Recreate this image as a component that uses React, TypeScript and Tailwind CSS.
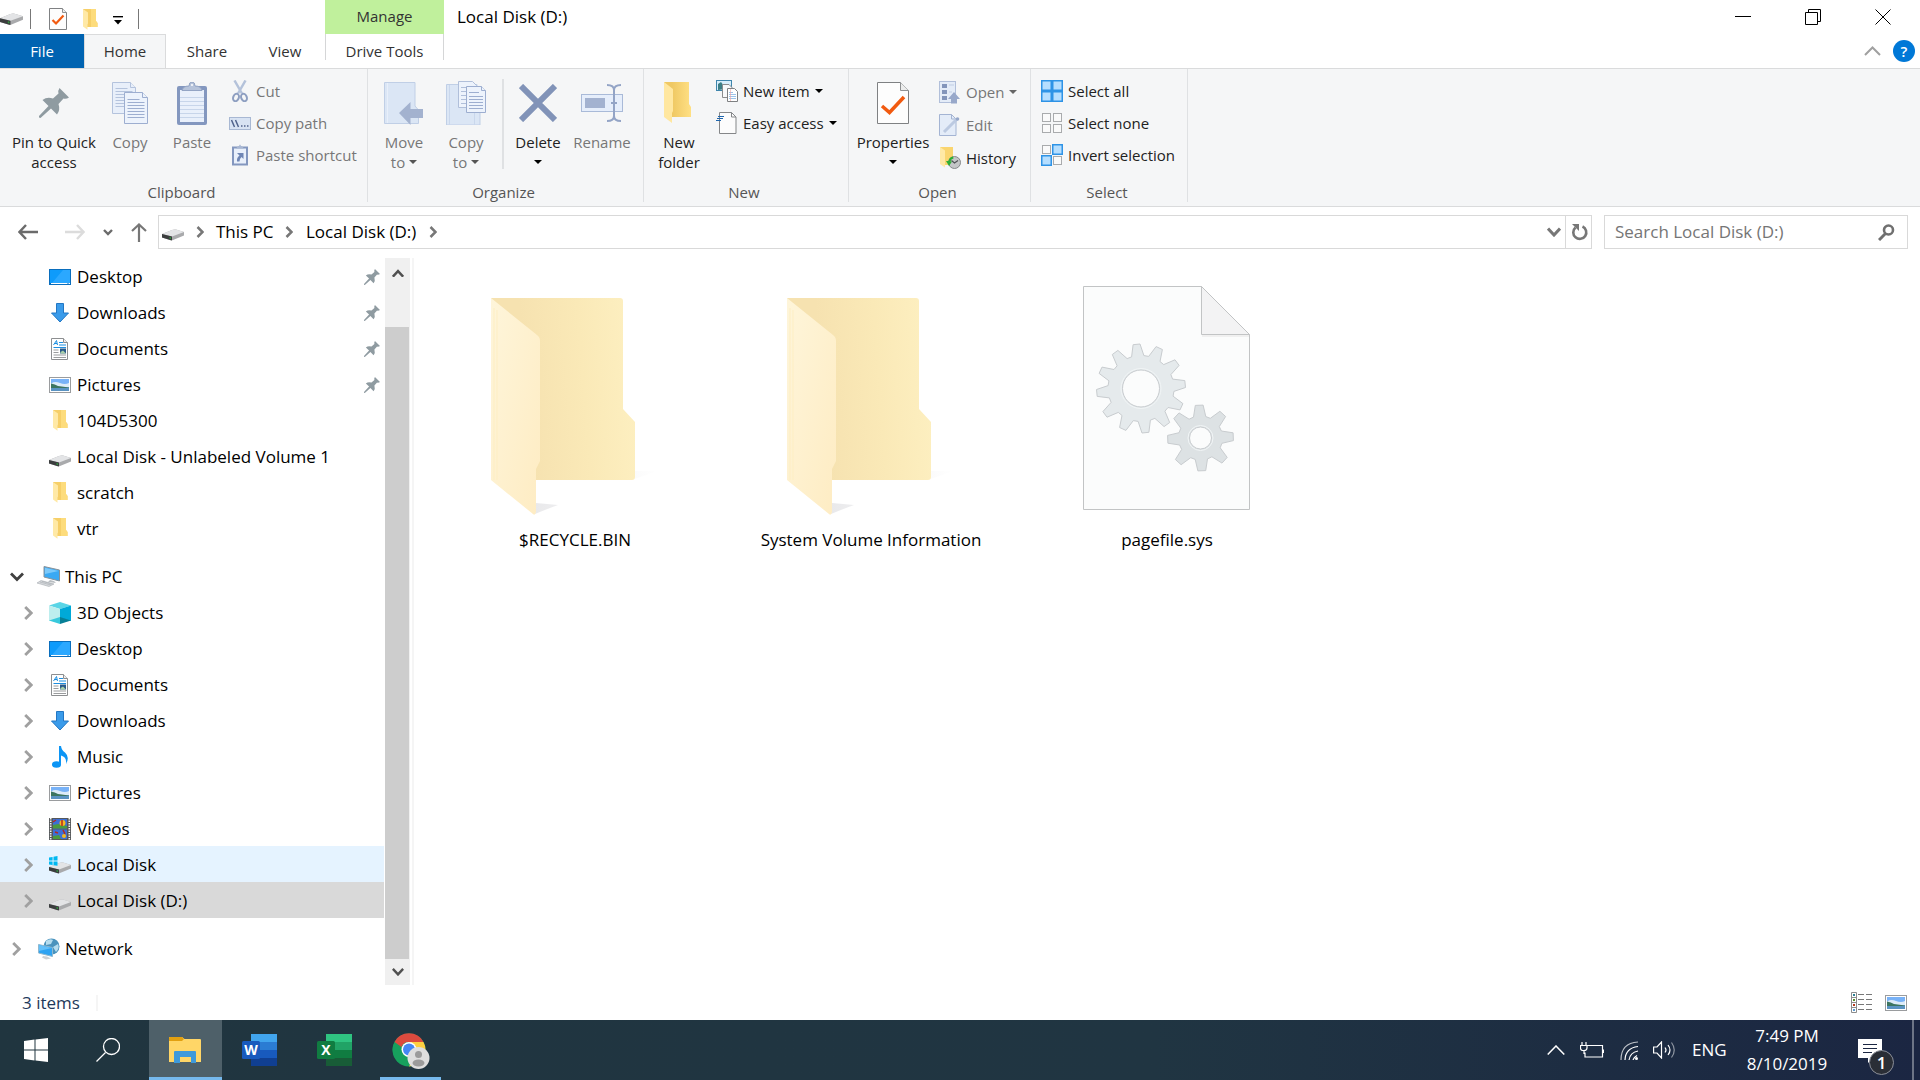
import type { ReactNode } from "react";

interface IconProps {
  className?: string;
}

const DriveIcon = ({ className = "w-[22px]" }: IconProps) => (
  <svg viewBox="0 0 22 12" className={`${className} shrink-0`}>
    <path d="M0 5 L10 1 Q12 0 14 .6 L22 3 L22 6.5 L11 11 Q9.500 11.600 8 11 L0 8.500Z" fill="#a9aaac" />
    <path d="M0 5 L10 1 Q12 0 14 .6 L22 3 L10 7.500Z" fill="#e3e4e6" />
    <path d="M0 5 L10 7.500 L10 11.400 L8 11 L0 8.500Z" fill="#3b3d3e" />
    <path d="M7.500 8 L9 8.400 L9 10 L7.500 9.600Z" fill="#2f9e3c" />
  </svg>
);

const WindowsDriveIcon = () => (
  <svg viewBox="0 0 22 18" className="w-[22px] shrink-0">
    <path d="M0 11 L10 7 Q12 6 14 6.600 L22 9 L22 12.500 L11 17 Q9.500 17.600 8 17 L0 14.500Z" fill="#a9aaac" />
    <path d="M0 11 L10 7 Q12 6 14 6.600 L22 9 L10 13.500Z" fill="#e3e4e6" />
    <path d="M0 11 L10 13.500 L10 17.400 L8 17 L0 14.500Z" fill="#3b3d3e" />
    <path d="M7.500 14 L9 14.400 L9 16 L7.500 15.600Z" fill="#2f9e3c" />
    <path d="M0 1.600 L3.600 1 L3.600 4.600 L0 4.600Z M4.500 .8 L8.500 0 L8.500 4.600 L4.500 4.600Z M0 5.500 L3.600 5.500 L3.600 9 L0 8.600Z M4.500 5.500 L8.500 5.500 L8.500 9.800 L4.500 9.200Z" fill="#00b8f1" />
  </svg>
);

const SmallFolderIcon = ({ className = "w-[15px]" }: IconProps) => (
  <svg viewBox="0 0 15 21" className={`${className} shrink-0`}>
    <path d="M0 0 H13 V12 L14.500 14 V18 H4 L0 2Z" fill="#f6cf68" />
    <path d="M8 0 H13 V12 L14.500 14 V18 H8Z" fill="#fddc7c" />
    <path d="M0 0 L5 3.500 V14.500 L4.500 15.500 V20.800 L0 17.500Z" fill="#ffe9a6" />
  </svg>
);

const DesktopIcon = () => (
  <svg viewBox="0 0 22 16" className="w-[22px] shrink-0">
    <rect width="22" height="16" fill="#0a6ebd" />
    <rect x="1" y="1" width="20" height="13" fill="#0e9bfb" />
    <path d="M14 1 H21 V14 H3Z" fill="#2ba8ff" />
    <path d="M2 14.500h16M18.500 14.500h1M20 14.500h1" stroke="#fff" strokeWidth="1" />
  </svg>
);

const DownloadIcon = () => (
  <svg viewBox="0 0 22 20" className="w-[22px] shrink-0">
    <path d="M7.500 .5 H14.500 V10 H19.500 L11 19 L2.500 10 H7.500Z" fill="#3a9bea" stroke="#2377c4" />
  </svg>
);

const DocumentIcon = () => (
  <svg viewBox="0 0 22 22" className="w-[22px] shrink-0">
    <path d="M2.500 .5 H14.500 L18.500 4.500 V21.500 H2.500Z" fill="#fff" stroke="#8d8f91" />
    <path d="M14.500 .5 V4.500 H18.500" fill="#eee" stroke="#8d8f91" />
    <path d="M4.500 7 L7.500 2.500 L8.500 7 M6 5.500 H8 M10 4.500h4M10 7h7M4.500 9.500h12.500" stroke="#1e8fe0" fill="none" />
    <path d="M4.500 12h5M4.500 14.500h5M4.500 17h12.500M4.500 19.500h12.500" stroke="#9a9c9e" />
    <rect x="11" y="10.500" width="6" height="5" fill="#2a5a8a" />
    <path d="M11.500 14 L14 12.500 L17 15.500H11.500Z" fill="#a9cfa6" />
  </svg>
);

const PictureIcon = () => (
  <svg viewBox="0 0 22 16" className="w-[22px] shrink-0">
    <rect x=".5" y=".5" width="21" height="15" fill="#fff" stroke="#9a9c9e" />
    <rect x="2" y="2" width="18" height="12" fill="#78b2f7" />
    <path d="M2 6.500 Q6 4 11 6 T20 6 V10 H2Z" fill="#dcebf8" />
    <path d="M2 6.500 Q6 7 9 9 L20 10.500 V11 H2Z" fill="#3c7560" />
    <path d="M2 11 H20 V14 H2Z" fill="#5a93c2" />
  </svg>
);

const ComputerIcon = () => (
  <svg viewBox="0 0 23 21" className="w-[23px] shrink-0">
    <path d="M7 .5 L22.500 4 V15 L7 11Z" fill="#3aa9f4" stroke="#8a9298" />
    <path d="M8 1.800 L21.500 5 L8 8Z" fill="#7cc9fa" />
    <path d="M13 14 L17 15 L19 17 L11 16Z" fill="#b8bdc1" />
    <path d="M4 14.500 L17 18 L12 20.500 L0 17Z" fill="#d6d9dc" stroke="#a8adb1" strokeWidth=".6" />
    <path d="M3 16 L14 19 M5 15.300 L15.500 18.200" stroke="#a8adb1" strokeWidth=".6" />
  </svg>
);

const CubeIcon = () => (
  <svg viewBox="0 0 22 22" className="w-[22px] shrink-0">
    <path d="M0 3.500 L11 0 L22 3.500 L11 7Z" fill="#5ad5e6" />
    <path d="M0 3.500 L11 7 V16 L0 19Z" fill="#bdeeee" />
    <path d="M22 3.500 L11 7 V16 L22 19Z" fill="#00a9d8" />
    <path d="M0 18.500 L11 15 V22Z" fill="#38c9dc" />
    <path d="M22 18.500 L11 15 V22Z" fill="#077f96" />
  </svg>
);

const MusicIcon = () => (
  <svg viewBox="0 0 22 22" className="w-[22px] shrink-0">
    <ellipse cx="7.500" cy="18.500" rx="4.500" ry="3.300" fill="#0c95f5" />
    <path d="M10 0 H12 Q12.500 4 16 6.500 Q21 11 17 18 Q18 11 12 9.500 V19 H10Z" fill="#0c95f5" />
  </svg>
);

const VideoIcon = () => (
  <svg viewBox="0 0 22 22" className="w-[22px] shrink-0">
    <rect width="22" height="22" fill="#55585a" />
    <path d="M1.700 0V22M20.300 0V22" stroke="#f2f2f2" strokeWidth="1.600" strokeDasharray="1.500 1" />
    <rect x="4" y="1" width="14" height="9.500" fill="#3c6fd6" />
    <rect x="4" y="11.500" width="14" height="9.500" fill="#3c6fd6" />
    <path d="M4 10.500 V7 L9 6 L18 8 V10.500Z M4 21 V18 L10 17 L12 21Z" fill="#4b9a3e" />
    <circle cx="13.500" cy="5" r="3" fill="#f4b921" />
    <path d="M13 2v6M4 4l3-2M14 12l2 4M6 14l3 1" stroke="#b52a1e" strokeWidth="1.500" />
    <circle cx="15" cy="18" r="2" fill="#f4b921" />
  </svg>
);

const NetworkIcon = () => (
  <svg viewBox="0 0 22 22" className="w-[22px] shrink-0">
    <circle cx="13.500" cy="8.500" r="8" fill="#4a93bd" />
    <path d="M8 3 Q12 0 15 2 L13 6 L8 7Z M15 9 L20 6 Q22 10 18 14Z" fill="#b5dcee" />
    <path d="M.5 6.500 L14.500 9.500 V18.500 L.5 15Z" fill="#2ea3f2" stroke="#8fb8cf" />
    <path d="M1 7 L14 10 L1 13Z" fill="#62c0fa" />
    <path d="M5 18 L9 18.500 L13 20.500 L8 21.500 L4 19.500Z" fill="#cdd1d4" />
  </svg>
);

const PinIcon = ({ className = "w-4" }: IconProps) => (
  <svg viewBox="0 0 30 30" className={`${className} shrink-0`}>
    <path d="M20.500 0 L30 9.500 Q27 11.500 24.500 10.500 L19.500 16 Q21.500 22 18 26.500 L12 20.500 L1.500 30 L0 29.500 L0 28 L9.500 18 L3.500 12 Q8 8.500 14 10.500 L19.500 5.500 Q18.500 3 20.500 0Z" fill="#8f9ba1" />
  </svg>
);

const TreeChevron = ({ open = false }: { open?: boolean }) =>
  open ? (
    <svg viewBox="0 0 14 10" className="w-3.5 shrink-0">
      <path d="M1 1.500 L7 7.500 L13 1.500" fill="none" stroke="#404040" strokeWidth="2.800" />
    </svg>
  ) : (
    <svg viewBox="0 0 9 14" className="w-[9px] shrink-0">
      <path d="M1.200 1 L7.200 7 L1.200 13" fill="none" stroke="#a0a0a0" strokeWidth="2.800" />
    </svg>
  );

const Caret = ({ className = "text-black" }: IconProps) => (
  <svg viewBox="0 0 8 4" className={`${className} h-1 w-2 shrink-0`} fill="currentColor">
    <path d="M0 0H8L4 4Z" />
  </svg>
);

/* ribbon icons */

const CopyIcon = () => (
  <svg viewBox="0 0 36 42" className="w-9">
    <g fill="#e8effa" stroke="#b4c3dd">
      <path d="M.5 .5 H18.500 L23.500 5.500 V31.500 H.5Z" />
      <path d="M18.500 .5 V5.500 H23.500" />
      <path d="M3.500 6.500h12M3.500 9.500h17M3.500 12.500h17M3.500 15.500h17M3.500 18.500h17M3.500 21.500h17M3.500 24.500h17" />
    </g>
    <g fill="#edf3fc" stroke="#9daed0">
      <path d="M12.500 10.500 H30.500 L35.500 15.500 V41.500 H12.500Z" />
      <path d="M30.500 10.500 V15.500 H35.500" />
      <path d="M15.500 17.500h12M15.500 20.500h17M15.500 23.500h17M15.500 26.500h17M15.500 29.500h17M15.500 32.500h17M15.500 35.500h17" />
    </g>
  </svg>
);

const PasteIcon = () => (
  <svg viewBox="0 0 30 43" className="w-[30px]">
    <rect y="4" width="30" height="39" rx="2" fill="#8397bf" />
    <rect x="3" y="8" width="24" height="32" fill="#e9f0fb" />
    <path d="M3 15.500h24M3 19.500h24M3 23.500h24M3 27.500h24M3 31.500h24M3 35.500h24" stroke="#c7d5ea" />
    <path d="M5 8.500 Q6 4 12 4 Q12 0 15 0 Q18 0 18 4 Q24 4 25 8.500Z" fill="#b6c3da" stroke="#93a4c4" />
    <circle cx="15" cy="3" r="1" fill="#fff" />
  </svg>
);

const CutIcon = () => (
  <svg viewBox="0 0 22 22" className="w-[22px]" fill="none">
    <path d="M5.500 .5 L13 13.500 M16.500 .5 L9 13.500" stroke="#b4c2da" strokeWidth="2.500" />
    <ellipse cx="7" cy="17.500" rx="2.800" ry="3.800" transform="rotate(20 7 17.500)" stroke="#8e9fc1" strokeWidth="2" />
    <ellipse cx="15" cy="17.500" rx="2.800" ry="3.800" transform="rotate(-20 15 17.500)" stroke="#8e9fc1" strokeWidth="2" />
  </svg>
);

const CopyPathIcon = () => (
  <svg viewBox="0 0 22 13" className="w-[22px]">
    <rect x=".5" y=".5" width="21" height="12" fill="#d8e3f3" stroke="#a8b8d3" />
    <path d="M2.500 3 L5.500 10 M6.500 3 L9.500 10" stroke="#50638c" strokeWidth="1.500" />
    <path d="M12 9h1.500M15 9h1.500M18 9h1.500" stroke="#50638c" strokeWidth="1.600" />
  </svg>
);

const PasteShortcutIcon = () => (
  <svg viewBox="0 0 22 22" className="w-[22px]">
    <rect x="4" y="3.500" width="14" height="17" fill="#e9f0fb" stroke="#8397bf" strokeWidth="2" />
    <path d="M7 4.500 L9 2 H10 Q11 -1 12 2 H13 L15 4.500Z" fill="#a9b8d3" />
    <path d="M8 9 H14.500 V15 L12.500 13 Q10.500 14.500 10.500 17.500 H8 Q7.500 13.500 10.500 11.500Z" fill="#6f86b5" />
  </svg>
);

const MoveToIcon = () => (
  <svg viewBox="0 0 40 43" className="w-10">
    <path d="M.5 .5 H31 V24 L34.500 28 V41.500 H.5Z" fill="#dbe6f5" stroke="#c0cfe6" />
    <path d="M3.500 1V41" stroke="#e8effa" />
    <path d="M15 31 L26.500 20 V27 H39 V36 H26.500 V43Z" fill="#a3b2cf" />
  </svg>
);

const CopyToIcon = () => (
  <svg viewBox="0 0 40 44" className="w-10">
    <path d="M.5 3.500 H31 V27 L34 30 V44 H.5Z" fill="#dbe6f5" stroke="#c0cfe6" />
    <path d="M3.500 4V44M28.500 30V44" stroke="#c9d7ec" />
    <g fill="#edf3fc" stroke="#b0bfda">
      <path d="M12.500 .5 H26.500 L30.500 4.500 V26.500 H12.500Z" />
      <path d="M15 6.500h9M15 10.500h12M15 14.500h12M15 18.500h12M15 22.500h12" />
    </g>
    <g fill="#edf3fc" stroke="#9daed0">
      <path d="M20.500 5.500 H35.500 L39.500 9.500 V31.500 H20.500Z" />
      <path d="M35.500 5.500V9.500H39.500M23 11.500h10M23 15.500h14M23 18.500h14M23 21.500h14M23 24.500h14M23 27.500h14" />
    </g>
  </svg>
);

const DeleteIcon = () => (
  <svg viewBox="0 0 38 38" className="w-[38px]">
    <path d="M2 2 L36 36 M36 2 L2 36" stroke="#8193b8" strokeWidth="6" />
  </svg>
);

const RenameIcon = () => (
  <svg viewBox="0 0 42 38" className="w-[42px]" fill="none">
    <rect x=".5" y="10.500" width="41" height="17" fill="#e6eefb" stroke="#a9bad8" />
    <rect x="4" y="14" width="20" height="10" fill="#a3b2d0" />
    <path d="M26 1 Q33 1 33 6 V32 Q33 37 26 37 M40 1 Q33 1 33 6 M33 32 Q33 37 40 37 M30 19h6" stroke="#93a4c6" strokeWidth="2" />
  </svg>
);

const NewFolderIcon = () => (
  <svg viewBox="0 0 30 42" className="w-[30px]">
    <defs>
      <linearGradient id="folderBack">
        <stop offset=".3" stopColor="#efc863" />
        <stop offset="1" stopColor="#ffe084" />
      </linearGradient>
    </defs>
    <path d="M0 0 H25 V22 L27 25 V35 H8Z" fill="url(#folderBack)" />
    <path d="M0 0 L9 7 V29 L8 31 V41 L0 35Z" fill="#ffe7a0" />
  </svg>
);

const NewItemIcon = () => (
  <svg viewBox="0 0 22 22" className="w-[22px]">
    <rect x=".5" y=".5" width="15" height="10" fill="#d7eefb" stroke="#3f86ad" />
    <path d="M2 10 V4 L5 2 L8 6 L10 9Z" fill="#3c7f86" />
    <path d="M6.500 4.500 H13 L16 7.500 V17.500 H6.500Z" fill="#f8f9fa" stroke="#8a8c8e" />
    <path d="M11.500 8.500 H18.500 L21.500 11.500 V21.500 H11.500Z" fill="#fff" stroke="#7e8082" />
    <path d="M13 12.500h4M13 14.500h7M13 16.500h7M13 18.500h7" stroke="#9dc3ea" />
    <path d="M14.500 9v12" stroke="#f0a3a3" strokeWidth=".6" />
  </svg>
);

const EasyAccessIcon = () => (
  <svg viewBox="0 0 22 23" className="w-[22px]">
    <path d="M3.500 .5 H15.500 L20 5 V21.500 H3.500Z" fill="#fcfcfc" stroke="#858789" />
    <path d="M15.500 .5V5H20" fill="none" stroke="#858789" />
    <path d="M2 4.500h6M1 6.500h6M0 8.500h5" stroke="#1f66ad" />
  </svg>
);

const PropertiesIcon = ({ className = "w-8" }: IconProps) => (
  <svg viewBox="0 0 32 42" className={className}>
    <path d="M.5 .5 H23.500 L31.500 8.500 V41.500 H.5Z" fill="#fdfdfd" stroke="#7f8183" />
    <path d="M23.500 .5 V8.500 H31.500" fill="#eceded" stroke="#8f9193" />
    <path d="M5 24 L12.500 30.500 L27 15" fill="none" stroke="#f15a10" strokeWidth="3.500" />
  </svg>
);

const SmallPropertiesIcon = () => (
  <svg viewBox="0 0 18 22" className="w-[18px]">
    <path d="M.5 .5 H13.500 L17.500 4.500 V21.500 H.5Z" fill="#fdfdfd" stroke="#7f8183" />
    <path d="M13.500 .5 V4.500 H17.500" fill="#eceded" stroke="#8f9193" />
    <path d="M3.500 12 L7 15.500 L14.500 7.500" fill="none" stroke="#f15a10" strokeWidth="2.200" />
  </svg>
);

const OpenIcon = () => (
  <svg viewBox="0 0 22 23" className="w-[22px]">
    <rect x=".5" y=".5" width="16" height="21" fill="#e4ecf8" stroke="#b1bfda" />
    <path d="M3 3h5v4H3zM3 9h5v4H3zM3 15h5v4H3z" fill="#8395bb" />
    <path d="M10 4h5M10 11h3" stroke="#c0cde3" />
    <path d="M15 11 L21 18 H18 V22.500 H12 V18 H9Z" fill="#98a8ca" />
  </svg>
);

const EditIcon = () => (
  <svg viewBox="0 0 22 22" className="w-[22px]">
    <path d="M.5 .5 H12.500 L17 5 V21.500 H.5Z" fill="#e4ecf8" stroke="#a4b4d3" />
    <path d="M12.500 .5V5H17" fill="none" stroke="#a4b4d3" />
    <path d="M5 18 L18 5" stroke="#bccae1" strokeWidth="3" />
    <circle cx="18.500" cy="5" r="1.800" fill="#97a8ca" />
  </svg>
);

const HistoryIcon = () => (
  <svg viewBox="0 0 22 22" className="w-[22px]">
    <path d="M1 0 H14 V18 H5Z" fill="#fad56f" />
    <path d="M1 0 L6 3.500 V20.500 L1 17Z" fill="#ffe9a6" />
    <circle cx="15.500" cy="15.500" r="6" fill="#c4c6c7" stroke="#85888a" />
    <path d="M12.500 13.500 L15.500 16 L19 13.500" fill="none" stroke="#505356" strokeWidth="1.200" />
    <path d="M14 9.500 Q10 10 9.500 14 H7 L10 19 L13 14.500 H11.500 Q12 12 14.500 11.500Z" fill="#2fae35" />
  </svg>
);

const SelectIcon = ({ filled }: { filled: boolean[] }) => (
  <svg viewBox="0 0 22 22" className="w-[22px]">
    {filled.map((on, i) => {
      const x = (i % 2) * 11;
      const y = Math.floor(i / 2) * 11;
      return on ? (
        <rect key={i} x={x + 0.75} y={y + 0.75} width="9.500" height="9.500" fill="#b5deff" stroke="#2e93e6" strokeWidth="1.500" />
      ) : (
        <rect key={i} x={x + 1.5} y={y + 1.5} width="8" height="8" fill="#fafafa" stroke="#a9abad" />
      );
    })}
  </svg>
);

/* ribbon */

interface BigButtonProps {
  icon: ReactNode;
  lines: string[];
  width: string;
  caret?: boolean;
  disabled?: boolean;
}

const BigButton = ({ icon, lines, width, caret, disabled }: BigButtonProps) => (
  <button
    disabled={disabled}
    className={`${width} ${disabled ? "text-[#777]" : "text-[#222]"} flex shrink-0 flex-col items-center gap-[7px] pt-3 leading-5 whitespace-nowrap`}
  >
    <span className="flex h-11 items-center">{icon}</span>
    <span className="flex flex-col items-center">
      {lines.map((line, i) => (
        <span key={line} className="flex h-5 items-center gap-1">
          {line}
          {caret && lines.length > 1 && i === lines.length - 1 && <Caret className="text-[#555]" />}
        </span>
      ))}
      {caret && lines.length === 1 && (
        <span className="flex h-5 items-center">
          <Caret />
        </span>
      )}
    </span>
  </button>
);

interface SmallButtonProps {
  icon: ReactNode;
  label: string;
  caret?: boolean;
  disabled?: boolean;
}

const SmallButton = ({ icon, label, caret, disabled }: SmallButtonProps) => (
  <button
    disabled={disabled}
    className={`${disabled ? "text-[#777]" : "text-[#222]"} flex h-8 items-center gap-[5px] whitespace-nowrap`}
  >
    <span className="flex w-[22px] justify-center">{icon}</span>
    {label}
    {caret && <Caret className={disabled ? "text-[#666]" : "text-black"} />}
  </button>
);

const RibbonGroup = ({ title, width, children }: { title: string; width: string; children: ReactNode }) => (
  <section className={`${width} flex shrink-0 flex-col pb-1`}>
    <div className="flex flex-1 border-r border-[#dfe1e3]">{children}</div>
    <h2 className="border-r border-[#dfe1e3] pr-1 text-center leading-5 text-[#555]">{title}</h2>
  </section>
);

const Ribbon = () => (
  <div className="flex h-[139px] border-y border-[#dadbdc] bg-[#f5f6f7] text-[15px]">
    <RibbonGroup title="Clipboard" width="w-[368px]">
      <div className="flex pl-3">
        <BigButton width="w-[84px]" lines={["Pin to Quick", "access"]} icon={<PinIcon className="w-[30px]" />} />
        <BigButton width="w-[68px]" lines={["Copy"]} icon={<CopyIcon />} disabled />
        <BigButton width="w-14" lines={["Paste"]} icon={<PasteIcon />} disabled />
        <div className="flex flex-col pt-1.5 pl-[9px]">
          <SmallButton label="Cut" icon={<CutIcon />} disabled />
          <SmallButton label="Copy path" icon={<CopyPathIcon />} disabled />
          <SmallButton label="Paste shortcut" icon={<PasteShortcutIcon />} disabled />
        </div>
      </div>
    </RibbonGroup>
    <RibbonGroup title="Organize" width="w-[276px]">
      <div className="flex pl-1">
        <BigButton width="w-16" lines={["Move", "to"]} icon={<MoveToIcon />} caret disabled />
        <BigButton width="w-15" lines={["Copy", "to"]} icon={<CopyToIcon />} caret disabled />
        <div className="mt-2.5 ml-1.5 h-[90px] w-0.5 bg-[#dfe1e3]" />
        <BigButton width="w-[68px]" lines={["Delete"]} icon={<DeleteIcon />} caret />
        <BigButton width="w-[60px]" lines={["Rename"]} icon={<RenameIcon />} disabled />
      </div>
    </RibbonGroup>
    <RibbonGroup title="New" width="w-[205px]">
      <BigButton width="w-[70px]" lines={["New", "folder"]} icon={<NewFolderIcon />} />
      <div className="flex flex-col pt-1.5 pl-0.5">
        <SmallButton label="New item" icon={<NewItemIcon />} caret />
        <SmallButton label="Easy access" icon={<EasyAccessIcon />} caret />
      </div>
    </RibbonGroup>
    <RibbonGroup title="Open" width="w-[182px]">
      <BigButton width="w-[88px]" lines={["Properties"]} icon={<PropertiesIcon />} caret />
      <div className="flex flex-col gap-px pt-[7px] pl-0.5">
        <SmallButton label="Open" icon={<OpenIcon />} caret disabled />
        <SmallButton label="Edit" icon={<EditIcon />} disabled />
        <SmallButton label="History" icon={<HistoryIcon />} />
      </div>
    </RibbonGroup>
    <RibbonGroup title="Select" width="w-[157px]">
      <div className="flex flex-col pt-1.5 pl-2.5">
        <SmallButton label="Select all" icon={<SelectIcon filled={[true, true, true, true]} />} />
        <SmallButton label="Select none" icon={<SelectIcon filled={[false, false, false, false]} />} />
        <SmallButton label="Invert selection" icon={<SelectIcon filled={[false, true, true, false]} />} />
      </div>
    </RibbonGroup>
  </div>
);

const TitleBar = () => (
  <header className="flex">
    <div className="flex w-[325px] shrink-0 flex-col">
      <div className="flex h-[34px] items-center pt-1">
        <DriveIcon className="w-[23px]" />
        <div className="ml-[7px] h-5 w-px bg-[#777]" />
        <button aria-label="Properties" className="ml-[18px]">
          <SmallPropertiesIcon />
        </button>
        <button aria-label="New folder" className="ml-4">
          <SmallFolderIcon />
        </button>
        <button aria-label="Customize Quick Access Toolbar" className="ml-[15px] pt-0.5">
          <svg viewBox="0 0 10 9" className="w-2.5">
            <path d="M0 .7H10" stroke="#000" strokeWidth="1.400" />
            <path d="M1 4H9L5 8.500Z" />
          </svg>
        </button>
        <div className="ml-[15px] h-5 w-px bg-[#777]" />
      </div>
      <nav className="flex h-[34px] text-[15px] text-[#333]">
        <button className="w-[84px] bg-[#0063b1] text-white">File</button>
        <button className="-mb-px w-[82px] border border-b-0 border-[#dadbdc] bg-[#f5f6f7] pb-px">Home</button>
        <button className="w-[82px]">Share</button>
        <button className="w-[74px]">View</button>
      </nav>
    </div>
    <div className="flex w-[119px] shrink-0 flex-col text-[15px] text-[#333]">
      <div className="flex h-[34px] items-center justify-center bg-[#c0f09c] pb-0.5">Manage</div>
      <button className="mb-2 h-[26px] border-x border-[#d5d6d7] pt-2 leading-[18px] whitespace-nowrap">Drive Tools</button>
    </div>
    <h1 className="pt-[5px] pl-[13px] text-[17px] leading-6">Local Disk (D:)</h1>
    <div className="ml-auto flex flex-col">
      <div className="flex h-[34px] pr-0.5">
        <button aria-label="Minimize" className="flex w-[70px] items-center justify-center">
          <svg viewBox="0 0 16 16" className="w-4"><path d="M0 7.500H16" stroke="#000" /></svg>
        </button>
        <button aria-label="Restore" className="flex w-[70px] items-center justify-center">
          <svg viewBox="0 0 16 16" className="w-4" fill="none" stroke="#000">
            <path d="M.5 3.500H12.500V15.500H.5ZM3.500 3.500V.5H15.500V12.500H12.500" />
          </svg>
        </button>
        <button aria-label="Close" className="flex w-[70px] items-center justify-center">
          <svg viewBox="0 0 16 16" className="w-4"><path d="M.5 .5L15.500 15.500M15.500 .5L.5 15.500" stroke="#000" /></svg>
        </button>
      </div>
      <div className="flex h-[34px] items-center justify-end gap-3 pr-[5px]">
        <button aria-label="Minimize the Ribbon">
          <svg viewBox="0 0 17 10" className="w-[17px]"><path d="M1 9L8.500 1.500L16 9" fill="none" stroke="#a0a0a0" strokeWidth="2" /></svg>
        </button>
        <button aria-label="Help" className="flex size-[22px] items-center justify-center rounded-full bg-[#0078d7] text-[15px] leading-5 font-semibold text-white">
          ?
        </button>
      </div>
    </div>
  </header>
);

const Crumb = () => (
  <svg viewBox="0 0 8 12" className="w-2 shrink-0">
    <path d="M1.500 1L6.500 6L1.500 11" fill="none" stroke="#777" strokeWidth="2.500" />
  </svg>
);

const AddressBar = () => (
  <div className="flex items-center py-2 pr-3 pl-[18px] text-[17px]">
    <button aria-label="Back">
      <svg viewBox="0 0 20 16" className="w-5"><path d="M8 1L1.500 8L8 15M2 8H20" fill="none" stroke="#6b6b6b" strokeWidth="2.400" /></svg>
    </button>
    <button aria-label="Forward" className="ml-[27px]" disabled>
      <svg viewBox="0 0 20 16" className="w-5"><path d="M12 1L18.500 8L12 15M18 8H0" fill="none" stroke="#dcdcdc" strokeWidth="2.400" /></svg>
    </button>
    <button aria-label="Recent locations" className="ml-[18px]">
      <svg viewBox="0 0 10 7" className="w-2.5"><path d="M1 1L5 5L9 1" fill="none" stroke="#6b6b6b" strokeWidth="2.400" /></svg>
    </button>
    <button aria-label="Up" className="ml-[18px]">
      <svg viewBox="0 0 16 19" className="w-4"><path d="M1 8L8 1.500L15 8M8 2V19" fill="none" stroke="#777" strokeWidth="2.200" /></svg>
    </button>
    <div className="ml-[11px] flex h-[34px] flex-1 items-center border border-[#d9d9d9]">
      <div className="flex flex-1 items-center pl-[3px]">
        <span className="pt-1.5"><DriveIcon /></span>
        <span className="ml-3"><Crumb /></span>
        <a href="#this-pc" className="ml-3 w-[69px] whitespace-nowrap">This PC</a>
        <Crumb />
        <a href="#local-disk-d" className="ml-[13px] w-[123px] pr-3 whitespace-nowrap">Local Disk (D:)</a>
        <Crumb />
      </div>
      <button aria-label="Previous locations" className="px-1">
        <svg viewBox="0 0 14 10" className="w-3.5"><path d="M1 1.500L7 8L13 1.500" fill="none" stroke="#777" strokeWidth="3" /></svg>
      </button>
      <button aria-label="Refresh" className="flex h-full w-[26px] items-center justify-center border-l border-[#d9d9d9] pl-0.5">
        <svg viewBox="0 0 18 18" className="w-[18px]" fill="none">
          <path d="M11.500 3.500A6.500 6.500 0 1 1 4.500 4.500" stroke="#777" strokeWidth="2.600" />
          <path d="M1 1H8V8Z" fill="#777" />
        </svg>
      </button>
    </div>
    <label className="ml-3 flex h-[34px] w-[304px] items-center border border-[#d9d9d9] pr-3 pl-2.5">
      <input
        type="text"
        aria-label="Search Local Disk (D:)"
        placeholder="Search Local Disk (D:)"
        className="min-w-0 flex-1 outline-none placeholder:text-[#757575]"
      />
      <svg viewBox="0 0 17 17" className="w-[17px]" fill="none" stroke="#707070">
        <circle cx="10.500" cy="6" r="4.500" strokeWidth="2.600" />
        <path d="M7.500 9.500L1 16" strokeWidth="3" />
      </svg>
    </label>
  </div>
);

/* navigation pane */

const quickAccess = [
  { name: "Desktop", icon: <DesktopIcon />, pinned: true },
  { name: "Downloads", icon: <DownloadIcon />, pinned: true },
  { name: "Documents", icon: <DocumentIcon />, pinned: true },
  { name: "Pictures", icon: <PictureIcon />, pinned: true },
  { name: "104D5300", icon: <SmallFolderIcon /> },
  { name: "Local Disk - Unlabeled Volume 1", icon: <span className="pt-2"><DriveIcon /></span> },
  { name: "scratch", icon: <SmallFolderIcon /> },
  { name: "vtr", icon: <SmallFolderIcon /> },
];

const thisPc = [
  { name: "3D Objects", icon: <CubeIcon />, bg: "" },
  { name: "Desktop", icon: <DesktopIcon />, bg: "" },
  { name: "Documents", icon: <DocumentIcon />, bg: "" },
  { name: "Downloads", icon: <DownloadIcon />, bg: "" },
  { name: "Music", icon: <MusicIcon />, bg: "" },
  { name: "Pictures", icon: <PictureIcon />, bg: "" },
  { name: "Videos", icon: <VideoIcon />, bg: "" },
  { name: "Local Disk", icon: <WindowsDriveIcon />, bg: "bg-[#e5f3ff]" },
  { name: "Local Disk (D:)", icon: <span className="pt-2"><DriveIcon /></span>, bg: "bg-[#d9d9d9]" },
];

const NavigationPane = () => (
  <aside className="flex w-[414px] shrink-0 border-r-2 border-[#f5f5f5] text-[17px] leading-6">
    <div className="w-96 shrink-0">
      <ul>
        {quickAccess.map((item) => (
          <li key={item.name} className="flex h-9 items-center pt-px pr-1 pl-12">
            <span className="flex w-6 justify-center">{item.icon}</span>
            <span className="flex-1 pl-[5px] whitespace-nowrap">{item.name}</span>
            {item.pinned && <PinIcon />}
          </li>
        ))}
      </ul>
      <div className="mt-3 flex h-9 items-center pt-px pl-2.5">
        <TreeChevron open />
        <span className="ml-[13px]"><ComputerIcon /></span>
        <span className="pl-[5px]">This PC</span>
      </div>
      <ul>
        {thisPc.map((item) => (
          <li key={item.name} className={`${item.bg} flex h-9 items-center pt-px pl-6`}>
            <TreeChevron />
            <span className="ml-[15px] flex w-6 justify-center">{item.icon}</span>
            <span className="pl-[5px] whitespace-nowrap">{item.name}</span>
          </li>
        ))}
      </ul>
      <div className="mt-3 flex h-9 items-center pt-px pl-3">
        <TreeChevron />
        <span className="ml-[17px]"><NetworkIcon /></span>
        <span className="pl-[5px]">Network</span>
      </div>
    </div>
    <div className="ml-px flex w-[25px] flex-col bg-[#f0f0f0]">
      <button aria-label="Scroll up" className="flex h-[30px] items-center justify-center">
        <svg viewBox="0 0 14 10" className="w-3"><path d="M1 9L7 2.500L13 9" fill="none" stroke="#505050" strokeWidth="2.800" /></svg>
      </button>
      <div className="mt-[39px] mr-px flex-1 bg-[#cdcdcd]" />
      <button aria-label="Scroll down" className="flex h-[26px] items-center justify-center">
        <svg viewBox="0 0 14 10" className="w-3"><path d="M1 1L7 7.500L13 1" fill="none" stroke="#505050" strokeWidth="2.800" /></svg>
      </button>
    </div>
  </aside>
);

/* file area */

const LargeFolder = () => (
  <svg viewBox="0 0 168 224" className="w-[168px] overflow-visible">
    <defs>
      <linearGradient id="back" x1="0" y1=".1" x2="1" y2="0">
        <stop offset=".2" stopColor="#f6e2b0" />
        <stop offset=".6" stopColor="#fae9b7" />
        <stop offset=".95" stopColor="#fdefc0" />
      </linearGradient>
      <linearGradient id="front" x1="0" y1="0" x2="1" y2="1">
        <stop offset="0" stopColor="#fef5da" />
        <stop offset="1" stopColor="#feecc3" />
      </linearGradient>
      <linearGradient id="shade">
        <stop offset="0" stopColor="#e9e9eb" />
        <stop offset="1" stopColor="#fff" />
      </linearGradient>
    </defs>
    <path d="M143 193 L144 185 L166 185 Q156 189 143 193Z M44 228 L45 217 L67 219 Q56 223 44 228Z" fill="url(#shade)" />
    <path d="M0 12 H129 Q132 12 132 15 V123 L144 136 V191 Q144 194 141 194 H30Z" fill="url(#back)" />
    <path d="M0 12 L46 49 Q49 51 49 55 V175 L45 183 V226 Q44 230 42 228 L0 194Z" fill="url(#front)" />
    <path d="M3 22V194M6 24V194" stroke="#fdeec3" />
  </svg>
);

const gearPoints = (cx: number, cy: number, outer: number, inner: number, teeth: number, turn: number) => {
  const points: string[] = [];
  const step = (Math.PI * 2) / teeth;
  for (let i = 0; i < teeth; i++) {
    const mid = i * step + turn;
    [
      [inner, -0.36],
      [outer, -0.15],
      [outer, 0.15],
      [inner, 0.36],
    ].forEach(([r, t]) => {
      const a = mid + t * step;
      points.push(`${(cx + r * Math.cos(a)).toFixed(1)},${(cy + r * Math.sin(a)).toFixed(1)}`);
    });
  }
  return points.join(" ");
};

const SystemFile = () => (
  <svg viewBox="0 0 168 224" className="w-[168px]">
    <path d="M.5 .5 H118.500 L166.500 48.500 V223.500 H.5Z" fill="#fbfcfc" stroke="#c2c4c5" />
    <path d="M118.500 .5 V48.500 H166.500Z" fill="#f3f3f4" stroke="#c2c4c5" />
    <path d="M119 50H166" stroke="#f0f0f0" strokeWidth="2" />
    <g stroke="#c8cccf" strokeLinejoin="round">
      <polygon points={gearPoints(58, 102.5, 44.5, 33, 12, -0.1)} fill="#e5eaec" />
      <circle cx="58" cy="102.500" r="18.500" fill="#fbfcfc" />
      <polygon points={gearPoints(117.5, 152, 33, 22, 8, -0.04)} fill="#dde2e4" />
      <circle cx="117.500" cy="152" r="11" fill="#fbfcfc" />
    </g>
    <circle cx="58" cy="102.500" r="20" fill="none" stroke="#f1f5f6" />
    <circle cx="117.500" cy="152" r="12.500" fill="none" stroke="#f1f5f6" />
  </svg>
);

const files = [
  { name: "$RECYCLE.BIN", icon: <LargeFolder /> },
  { name: "System Volume Information", icon: <LargeFolder /> },
  { name: "pagefile.sys", icon: <SystemFile /> },
];

const FileArea = () => (
  <main className="flex flex-1 flex-wrap content-start pt-7 pl-[13px] text-[17px] leading-6">
    {files.map((file) => (
      <figure key={file.name} className="flex w-74 flex-col items-center">
        {file.icon}
        <figcaption className="mt-[18px]">{file.name}</figcaption>
      </figure>
    ))}
  </main>
);

const StatusBar = () => (
  <footer className="flex h-[35px] items-center pr-[13px] pl-[22px] text-[17px] text-[#1e395b]">
    <span className="border-r-2 border-[#f5f5f5] pr-4 leading-4">3 items</span>
    <button aria-label="Details view" className="ml-auto">
      <svg viewBox="0 0 22 21" className="w-[22px]" fill="none">
        <path d="M.5 .5H5.500V20.500H.5ZM.5 5.500H5.500M.5 10.500H5.500M.5 15.500H5.500" stroke="#8c8c8c" />
        <path d="M7 2.500h6M15 2.500h6M7 7.500h6M15 7.500h6M7 12.500h6M15 12.500h6M7 17.500h6M15 17.500h6" stroke="#777" />
        <path d="M2 3h2" stroke="#2b8094" strokeWidth="2" />
        <path d="M2 8h2" stroke="#5a8f2e" strokeWidth="2" />
        <path d="M2 13h2" stroke="#b5391c" strokeWidth="2" />
        <path d="M2 18h2" stroke="#5b9ad0" strokeWidth="2" />
      </svg>
    </button>
    <button aria-label="Large icons view" className="ml-3">
      <PictureIcon />
    </button>
  </footer>
);

/* taskbar */

const OfficeIcon = ({ letter, bands, badge }: { letter: string; bands: string[]; badge: string }) => (
  <svg viewBox="0 0 36 32" className="w-9">
    {bands.map((color, i) => (
      <rect key={color} x="9" y={i * 8} width="26" height="8" fill={color} />
    ))}
    <rect x="0" y="7" width="18" height="18" rx="1.500" fill={badge} />
    <text x="9" y="21" textAnchor="middle" fontSize="14" fontWeight="700" fill="#fff">
      {letter}
    </text>
  </svg>
);

const Taskbar = () => (
  <div className="flex h-[60px] bg-linear-to-r from-[#20353f] via-[#203542] via-60% to-[#1b2642] text-[17px] text-white">
    <button aria-label="Start" className="flex w-18 items-center justify-center">
      <svg viewBox="0 0 24 24" className="w-6" fill="#fff">
        <path d="M0 3L10.500 1.500V11.500H0ZM11.500 1.400L24 0V11.500H11.500ZM0 12.500H10.500V22.500L0 21ZM11.500 12.500H24V24L11.500 22.600Z" />
      </svg>
    </button>
    <button aria-label="Search" className="flex w-[77px] items-center pl-6">
      <svg viewBox="0 0 24 24" className="w-6" fill="none" stroke="#fff" strokeWidth="1.300">
        <circle cx="15.500" cy="8.500" r="8" />
        <path d="M9.500 14.500L.5 23.500" />
      </svg>
    </button>
    <button aria-label="File Explorer" className="flex w-[73px] items-center justify-center border-b-3 border-[#76b9ed] bg-[#4e6069] pt-1 pr-0.5">
      <svg viewBox="0 0 32 27" className="w-8">
        <path d="M0 1Q0 0 1 0H13L15.500 2H31Q32 2 32 3V25H0Z" fill="#ffd667" />
        <path d="M0 1Q0 0 1 0H13L15 2L13 4H0Z" fill="#e2a010" />
        <path d="M5 26V15Q5 14 6 14H26Q27 14 27 15V26H22V20H11V26Z" fill="#3f9adb" />
      </svg>
    </button>
    <button aria-label="Word" className="flex w-[75px] items-center justify-center">
      <OfficeIcon letter="W" bands={["#41a5ee", "#2b7cd3", "#185abd", "#103f91"]} badge="#185abd" />
    </button>
    <button aria-label="Excel" className="flex w-[75px] items-center justify-center">
      <OfficeIcon letter="X" bands={["#2fc481", "#21a366", "#107c41", "#185c37"]} badge="#107c41" />
    </button>
    <button aria-label="Chrome" className="ml-2 flex w-[61px] items-center justify-center border-b-3 border-[#76b9ed] pt-1">
      <svg viewBox="0 0 38 36" className="w-[38px]">
        <circle cx="17" cy="17" r="16.500" fill="#17a05d" />
        <path d="M2.500 9A16.500 16.500 0 0 1 31.500 9H17A8 8 0 0 0 9.500 14Z" fill="#db4a3e" />
        <path d="M31.500 9A16.500 16.500 0 0 1 17 33.500L24.500 19Q25 13 17 9Z" fill="#fdcf41" />
        <path d="M2.500 9L10 21Q13 25 18 24.500L15 33A16.500 16.500 0 0 1 2.500 9Z" fill="#17a05d" />
        <circle cx="17" cy="16.500" r="7.500" fill="#fff" />
        <circle cx="17" cy="16.500" r="6" fill="#4487f5" />
        <circle cx="26.500" cy="25" r="11" fill="#dedede" />
        <circle cx="26.500" cy="21.500" r="3.500" fill="#9b9b9b" />
        <ellipse cx="26.500" cy="30" rx="6" ry="3.500" fill="#9b9b9b" />
      </svg>
    </button>
    <div className="ml-auto flex items-center">
      <button aria-label="Show hidden icons">
        <svg viewBox="0 0 18 10" className="w-[18px]"><path d="M.7 9.500L9 1L17.300 9.500" fill="none" stroke="#fff" strokeWidth="1.500" /></svg>
      </button>
      <svg viewBox="0 0 24 16" className="ml-[15px] w-6" fill="none" stroke="#fff" strokeWidth="1.200">
        <path d="M7 3.500H22.500V15H5V10.500M23.500 7.500V11M2 0V3M6 0V3M.5 3.500H7V6Q7 8.500 4 8.500Q.5 8.500 .5 6ZM4 8.500V12" />
      </svg>
      <svg viewBox="0 0 19 19" className="ml-4 w-[19px]" fill="none" stroke="#fff" strokeWidth="1.200">
        <path d="M1 19Q1 2 18 1" opacity=".7" />
        <path d="M5 19Q5.500 7 18 5.500M9 19Q10 11.500 18 10M13 19Q14 16 17 14.500" />
        <circle cx="16.500" cy="17.500" r="1.500" fill="#fff" stroke="none" />
      </svg>
      <svg viewBox="0 0 23 18" className="ml-3.5 w-[23px]" fill="none" stroke="#fff" strokeWidth="1.200">
        <path d="M.6 6H4L8.500 1V17L4 12H.6Z" />
        <path d="M12 6.500Q14 9 12 11.500M15 4Q19 9 15 14" />
        <path d="M18.500 1.500Q24 9 18.500 16.500" opacity=".5" />
      </svg>
      <span className="ml-4 w-9">ENG</span>
      <div className="ml-3 flex w-[94px] flex-col items-center leading-7 whitespace-nowrap">
        <span>7:49 PM</span>
        <span>8/10/2019</span>
      </div>
      <button aria-label="1 new notification" className="relative mt-3.5 ml-6 flex h-9 w-9 items-start">
        <svg viewBox="0 0 24 24" className="w-6">
          <path d="M0 0H24V19H15L10 24V19H0Z" fill="#fff" />
          <path d="M5 5.500H19M5 9.500H19M5 13.500H14" stroke="#1b2642" strokeWidth="1.200" />
        </svg>
        <span className="absolute right-0 bottom-0 flex size-[25px] items-center justify-center rounded-full border border-[#8b8f99] bg-[#2a2e36] text-[17px] leading-5 font-semibold">
          1
        </span>
      </button>
      <button aria-label="Show desktop" className="ml-[18px] h-[60px] w-2 border-l-2 border-[#6d7586]" />
    </div>
  </div>
);

const App = () => {
  return (
    <div className="flex min-h-screen flex-col bg-white font-['Open_Sans','Noto_Sans',sans-serif] text-black">
      <TitleBar />
      <Ribbon />
      <AddressBar />
      <div className="mt-px flex flex-1">
        <NavigationPane />
        <FileArea />
      </div>
      <StatusBar />
      <Taskbar />
    </div>
  );
};

export default App;
